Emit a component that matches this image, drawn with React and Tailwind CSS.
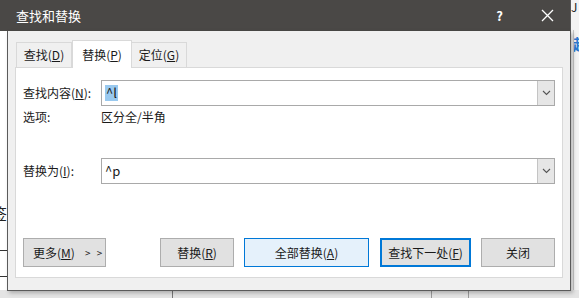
import React from "react";

const font = { fontFamily: '"Noto Sans CJK SC", "Noto Sans", sans-serif' };

function Chevron() {
  return (
    <svg width="9" height="6" viewBox="0 0 9 6" fill="none">
      <path d="M1 1l3.5 3.5L8 1" stroke="#555" strokeWidth="1.1" />
    </svg>
  );
}

function ComboBox({ children }) {
  return (
    <div className="flex h-[26px] flex-1 border border-[#a9a9a9] bg-white">
      <div className="flex flex-1 items-center px-[3px] text-[13px] text-[#1a1a1a]">{children}</div>
      <div className="flex w-[17px] items-center justify-center border-l border-[#c4c4c4] bg-[#e6e6e6]">
        <Chevron />
      </div>
    </div>
  );
}

function Btn({ children, className = "" }) {
  return (
    <div className={"flex h-[29px] items-center justify-center border text-[12px] text-[#1a1a1a] " + className}>
      {children}
    </div>
  );
}

export default function App() {
  return (
    <div className="relative h-[298px] w-[579px] overflow-hidden bg-white" style={font}>
      {/* desktop behind the dialog */}
      <div className="absolute left-[-9px] top-[205px] text-[16px] leading-none text-[#222]">签</div>
      <div className="absolute left-0 top-[250px] h-px w-[7px] bg-[#333]" />
      <div className="absolute left-0 top-[276px] h-px w-[7px] bg-[#333]" />
      <div className="absolute left-[570px] top-0 h-[298px] w-[9px] bg-[#f3f3f3]" />
      <div className="absolute left-[571px] top-[1px] text-[12px] leading-none text-[#222]">J</div>
      <div className="absolute left-[573px] top-[36px] text-[15px] leading-none font-bold text-[#2b79d0]">起</div>
      <div className="absolute left-[573px] top-[30px] h-[268px] w-px bg-[#c8c8c8]" />
      <div className="absolute left-0 top-[290px] h-[8px] w-[579px] bg-[#e4e4e4]" />
      <div className="absolute left-[172px] top-[290px] h-[8px] w-px bg-[#777]" />
      <div className="absolute left-[431px] top-[290px] h-[8px] w-px bg-[#999]" />
      <div className="absolute left-[468px] top-[290px] h-[8px] w-px bg-[#999]" />

      {/* dialog window */}
      <div className="absolute left-0 top-0 flex h-[291px] w-[571px] flex-col">
        <div className="flex h-[31px] items-center border-r border-[#5a5a5a] bg-[#4a4846] pl-[16px] text-[13px] text-white">
          <span className="flex-1">查找和替换</span>
          <span className="mr-[38px] text-[13px] font-bold">?</span>
          <svg width="13" height="13" viewBox="0 0 13 13" className="mr-[16px]">
            <path d="M1 1l11 11M12 1L1 12" stroke="#fff" strokeWidth="1.3" />
          </svg>
        </div>
        <div className="ml-[7px] flex flex-1 flex-col border-b border-l border-r border-[#5a5a5a] bg-[#f0f0f0] shadow-[2px_2px_4px_rgba(0,0,0,0.25)]">
          {/* tabs */}
          <div className="ml-[8px] mt-[9px] flex h-[27px] items-end text-[12px] text-[#1a1a1a]">
            <div className="flex h-[25px] w-[56px] items-center justify-center border border-b-0 border-[#d9d9d9] bg-[#f0f0f0]">
              查找(<u>D</u>)
            </div>
            <div className="relative z-10 -mb-px flex h-[28px] w-[60px] items-center justify-center border border-b-0 border-[#d9d9d9] bg-white">
              替换(<u>P</u>)
            </div>
            <div className="flex h-[25px] w-[55px] items-center justify-center border border-b-0 border-l-0 border-[#d9d9d9] bg-[#f0f0f0]">
              定位(<u>G</u>)
            </div>
          </div>
          {/* panel */}
          <div className="ml-[7px] mr-[7px] flex h-[211px] flex-col border border-[#d9d9d9] bg-white px-[7px] pt-[12px] text-[12px] text-[#1a1a1a]">
            <div className="flex items-center">
              <div className="w-[78px]">查找内容(<u>N</u>):</div>
              <ComboBox>
                <span className="bg-[#99c9ef] px-[1px] leading-[16px]">^l</span>
              </ComboBox>
            </div>
            <div className="mt-[2px] flex h-[18px] items-center">
              <div className="w-[78px]">选项:</div>
              <div>区分全/半角</div>
            </div>
            <div className="mt-[32px] flex items-center">
              <div className="w-[78px]">替换为(<u>I</u>):</div>
              <ComboBox>^p</ComboBox>
            </div>
            <div className="mt-[54px] flex">
              <Btn className="w-[83px] justify-start gap-[10px] border-[#adadad] bg-[#e1e1e1] pl-[9px]">
                <span>更多(<u>M</u>)</span>
                <span className="text-[10px] tracking-[2px]">&gt; &gt;</span>
              </Btn>
              <Btn className="ml-[54px] w-[74px] border-[#adadad] bg-[#e1e1e1]">替换(<u>R</u>)</Btn>
              <Btn className="ml-[10px] w-[125px] border-[#0078d7] bg-[#e5f1fb]">全部替换(<u>A</u>)</Btn>
              <Btn className="ml-[11px] w-[91px] border-2 border-[#0078d7] bg-[#e1e1e1]">查找下一处(<u>F</u>)</Btn>
              <Btn className="ml-[10px] w-[74px] border-[#adadad] bg-[#e1e1e1]">关闭</Btn>
            </div>
          </div>
        </div>
      </div>
    </div>
  );
}
